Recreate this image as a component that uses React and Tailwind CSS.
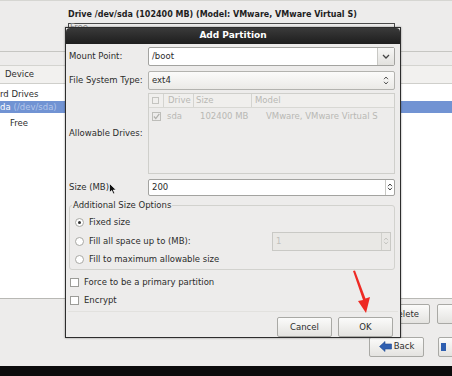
import React from 'react';

const font = { fontFamily: '"DejaVu Sans", "Liberation Sans", sans-serif' };

const Radio = ({ checked }) => (
  <span className="w-[9px] h-[9px] rounded-full border border-[#a8a8a4] bg-white flex items-center justify-center shrink-0">
    {checked && <span className="w-[3px] h-[3px] rounded-full bg-[#333]" />}
  </span>
);

const Check = () => (
  <span className="w-[9px] h-[9px] border border-[#9c9c98] bg-white shrink-0" />
);

const SpinArrows = ({ dim }) => (
  <div className={`w-[9px] h-full flex flex-col items-center justify-center border-l ${dim ? 'border-[#d0d0cc] text-[#c4c4c0]' : 'border-[#c8c8c4] text-[#444]'}`}>
    <svg width="6" height="4" viewBox="0 0 6 4"><path d="M1 3.2 L3 1 L5 3.2" fill="none" stroke="currentColor" strokeWidth="1" /></svg>
    <svg width="6" height="4" viewBox="0 0 6 4"><path d="M1 0.8 L3 3 L5 0.8" fill="none" stroke="currentColor" strokeWidth="1" /></svg>
  </div>
);

const Btn = ({ children, className = '' }) => (
  <div className={`h-[20px] rounded-[2px] border border-[#a9a9a5] bg-gradient-to-b from-[#fbfbfa] to-[#e4e3e0] flex items-center justify-center ${className}`}>
    {children}
  </div>
);

const AddPartition = () => (
  <div className="absolute left-[65px] top-[27px] w-[336px] h-[311px] border border-[#2d2d2d] bg-[#edeceb] flex flex-col shadow-[0_0_2px_rgba(0,0,0,0.4)]">
    <div className="h-[16px] rounded-t-[4px] bg-gradient-to-b from-[#3a3a3a] to-[#1e1e1e] flex items-center justify-center text-white font-bold text-[9px]">
      Add Partition
    </div>
    <div className="flex-1 flex flex-col px-[2px] pt-[2px] text-[#2c2c2c]">
      <div className="flex items-center h-[21px]">
        <div className="w-[80px] pl-[1px]">Mount Point:</div>
        <div className="flex-1 h-[19px] mr-[3px] border border-[#a3a3a0] rounded-[2px] bg-white flex items-center">
          <span className="flex-1 pl-[3px]">/boot</span>
          <div className="w-[17px] h-full border-l border-[#c8c8c4] bg-gradient-to-b from-[#f7f7f6] to-[#e2e1de] flex items-center justify-center">
            <svg width="8" height="5" viewBox="0 0 8 5"><path d="M1 1 L4 4 L7 1" fill="none" stroke="#444" strokeWidth="1.3" /></svg>
          </div>
        </div>
      </div>
      <div className="flex items-center h-[21px] mt-[3px]">
        <div className="w-[80px] pl-[1px]">File System Type:</div>
        <div className="flex-1 h-[19px] mr-[3px] border border-[#b3b3af] rounded-[2px] bg-gradient-to-b from-[#fbfbfa] to-[#ebeae7] flex items-center">
          <span className="flex-1 pl-[3px]">ext4</span>
          <div className="w-[17px] flex items-center justify-center">
            <svg width="6" height="9" viewBox="0 0 6 9"><path d="M1 3.2 L3 1 L5 3.2 M1 5.8 L3 8 L5 5.8" fill="none" stroke="#555" strokeWidth="1" /></svg>
          </div>
        </div>
      </div>
      <div className="flex items-center mt-[2px]">
        <div className="w-[80px] pl-[1px]">Allowable Drives:</div>
        <div className="flex-1 h-[81px] mr-[3px] border border-[#cfcfcb] bg-[#edeceb] flex flex-col text-[#b8b8b4]">
          <div className="h-[14px] flex items-center border-b border-[#d8d8d4] bg-[#f0efed]">
            <span className="w-[11px] pl-[3px] flex"><span className="w-[7px] h-[7px] border border-[#c4c4c0]" /></span>
            <span className="w-[30px] pl-[4px] border-l border-[#d4d4d0] ml-[3px]">Drive</span>
            <span className="w-[58px] pl-[2px] border-l border-[#d4d4d0]">Size</span>
            <span className="pl-[3px] border-l border-[#d4d4d0]">Model</span>
          </div>
          <div className="h-[16px] flex items-center">
            <span className="w-[11px] pl-[3px] flex">
              <span className="w-[9px] h-[9px] border border-[#bdbdb9] flex items-center justify-center">
                <svg width="7" height="7" viewBox="0 0 6 6"><path d="M0.8 3 L2.4 4.8 L5.4 0.8" fill="none" stroke="#b0b0ac" strokeWidth="1.1" /></svg>
              </span>
            </span>
            <span className="w-[30px] pl-[7px]">sda</span>
            <span className="w-[72px] pl-[10px]">102400 MB</span>
            <span className="pl-[4px]">VMware, VMware Virtual S</span>
          </div>
        </div>
      </div>
      <div className="flex items-center h-[18px] mt-[4px]">
        <div className="w-[80px] pl-[1px]">Size (MB)</div>
        <div className="flex-1 h-[17px] mr-[3px] border border-[#a3a3a0] rounded-[2px] bg-white flex items-center">
          <span className="flex-1 pl-[3px]">200</span>
          <SpinArrows />
        </div>
      </div>
      <div className="relative mt-[9px] mx-[1px] mr-[3px] h-[65px] border border-[#d2d2ce] rounded-[3px] flex flex-col pt-[8px] pl-[5px]">
        <span className="absolute -top-[7px] left-[2px] px-[1px] bg-[#edeceb]">Additional Size Options</span>
        <div className="flex items-center gap-[5px] h-[18px]"><Radio checked /><span>Fixed size</span></div>
        <div className="flex items-center gap-[5px] h-[20px]">
          <Radio /><span className="flex-1">Fill all space up to (MB):</span>
          <div className="w-[119px] h-[19px] mr-[3px] border border-[#c9c9c5] bg-[#e9e8e5] flex items-center text-[#c0c0bc]">
            <span className="flex-1 pl-[3px]">1</span>
            <SpinArrows dim />
          </div>
        </div>
        <div className="flex items-center gap-[5px] h-[19px]"><Radio /><span>Fill to maximum allowable size</span></div>
      </div>
      <div className="flex items-center gap-[5px] h-[18px] mt-[3px] pl-[2px]"><Check /><span>Force to be a primary partition</span></div>
      <div className="flex items-center gap-[5px] h-[18px] pl-[2px]"><Check /><span>Encrypt</span></div>
      <div className="border-t border-[#e2e1de] mt-[2px]" />
      <div className="flex justify-end gap-[6px] mt-[5px] mr-[5px]">
        <Btn className="w-[55px]">Cancel</Btn>
        <Btn className="w-[55px]">OK</Btn>
      </div>
    </div>
  </div>
);

export default function App() {
  return (
    <div className="relative w-[452px] h-[376px] overflow-hidden bg-[#edeceb] text-[8.5px] text-[#2e2e2e] flex flex-col" style={font}>
      <div className="h-[52px] border-t border-[#d6d6d2] border-b border-b-[#c6c6c2] flex flex-col pl-[68px] pt-[8px]">
        <div className="font-bold text-[8px] text-[#1e1e1e]">Drive /dev/sda (102400 MB) (Model: VMware, VMware Virtual S)</div>
        <div className="mt-[2px] w-[327px] h-[22px] border border-[#4a4a4a] border-b-0 text-[#888] pl-[1px] leading-[7px]">Free</div>
      </div>
      <div className="h-[14px] border-b border-[#d4d4d0]" />
      <div className="h-[18px] flex items-center pl-[5px] bg-[#f2f1ef] border-b border-[#cfcfcb]">Device</div>
      <div className="h-[215px] bg-white border-b border-[#b8b8b4] flex flex-col pt-[3px]">
        <div className="h-[14px] flex items-center">rd Drives</div>
        <div className="h-[12px] flex items-center bg-[#7193d3] text-white">
          da <span className="ml-[3px] text-[#b3c6ea]">(/dev/sda)</span>
        </div>
        <div className="h-[21px] flex items-center pl-[10px]">Free</div>
      </div>
      <div className="h-[30px] flex items-center justify-end gap-[7px] -mr-[20px]">
        <Btn className="w-[52px] justify-end pr-[10px]">Delete</Btn>
        <Btn className="w-[35px]" />
      </div>
      <div className="h-[37px] flex items-center justify-end gap-[14px] -mr-[20px] pb-[2px]">
        <Btn className="w-[55px] gap-[2px]">
          <svg width="13" height="11" viewBox="0 0 13 11"><path d="M0.5 5.5 L6 0.5 L6 3 L12.5 3 L12.5 8 L6 8 L6 10.5 Z" fill="#2f5fb0" stroke="#1f4a94" strokeWidth="0.6" /></svg>
          <span>Back</span>
        </Btn>
        <Btn className="w-[34px] justify-start pl-[2px]">
          <span className="w-[5px] h-[8px] bg-[#2f5fb0]" />
        </Btn>
      </div>
      <div className="flex-1 bg-[#0c0c0c]" />
      <AddPartition />
      <div className="absolute left-[109px] top-[183px]">
        <svg width="8" height="12" viewBox="0 0 8 12"><path d="M0.5 0.5 L0.5 9.5 L2.7 7.5 L4.3 11 L5.8 10.3 L4.3 7 L7.2 7 Z" fill="#111" stroke="#fff" strokeWidth="0.7" /></svg>
      </div>
      <div className="absolute left-[352px] top-[270px]">
        <svg width="20" height="44" viewBox="0 0 20 44"><path d="M1 1 L11 30 L6 31 L14 43 L18 27 L13.5 28.5 L3 0.5 Z" fill="#ee2a24" /></svg>
      </div>
    </div>
  );
}
